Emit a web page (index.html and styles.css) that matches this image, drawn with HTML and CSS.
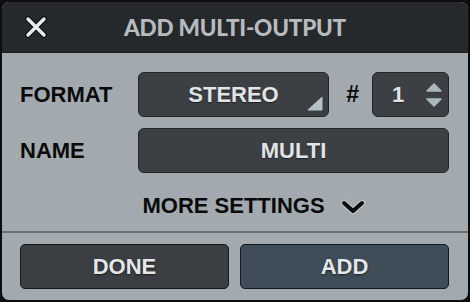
FILE: index.html
```html
<!DOCTYPE html>
<html>
<head>
<meta charset="utf-8">
<link rel="stylesheet" href="styles.css">
</head>
<body>
<div class="dialog">
  <div class="header">
    <svg class="close" width="22" height="22" viewBox="0 0 22 22">
      <path d="M3 3 L19 19 M19 3 L3 19" stroke="#111" stroke-width="6" stroke-linecap="round"/>
      <path d="M3 3 L19 19 M19 3 L3 19" stroke="#e6eef2" stroke-width="3.4" stroke-linecap="round"/>
    </svg>
    <div class="title">ADD MULTI-OUTPUT</div>
  </div>
  <div class="body">
    <div class="form">
      <div class="label">FORMAT</div>
      <div class="row">
        <div class="field select">STEREO
          <svg class="corner" width="16" height="15" viewBox="0 0 16 15"><path d="M15 1 L15 14 L1 14 Z" fill="#b5c1c8" stroke="#b5c1c8" stroke-linejoin="round" stroke-width="1"/></svg>
        </div>
        <div class="hash">#</div>
        <div class="field num">
          <span class="numval">1</span>
          <svg class="stepper" width="18" height="28" viewBox="0 0 18 28">
            <path d="M2 10 L9 3 L16 10 Z" fill="#aab7bf" stroke="#aab7bf" stroke-width="1.5" stroke-linejoin="round"/>
            <path d="M2 18 L9 25 L16 18 Z" fill="#aab7bf" stroke="#aab7bf" stroke-width="1.5" stroke-linejoin="round"/>
          </svg>
        </div>
      </div>
      <div class="label">NAME</div>
      <div class="field name">MULTI</div>
    </div>
    <div class="more">
      <span>MORE SETTINGS</span>
      <svg class="chev" width="26" height="18" viewBox="0 0 26 18">
        <path d="M4 5 L13 13 L22 5" fill="none" stroke="#c8cfd3" stroke-width="6.4" stroke-linecap="round" stroke-linejoin="round" opacity="0.6"/>
        <path d="M4 5 L13 13 L22 5" fill="none" stroke="#0b0b0b" stroke-width="4" stroke-linecap="round" stroke-linejoin="round"/>
      </svg>
    </div>
    <div class="footer">
      <div class="btn done">DONE</div>
      <div class="btn add">ADD</div>
    </div>
  </div>
</div>
</body>
</html>
```
FILE: styles.css
```css
html, body {
  margin: 0;
  padding: 0;
  background: #0c0d0e;
  width: 470px;
  height: 302px;
  overflow: hidden;
}
.dialog {
  margin: 2px 2px 0 2px;
  width: 466px;
  height: 298px;
  border-radius: 7px;
  overflow: hidden;
  background: #a3aaaf;
  display: flex;
  flex-direction: column;
  font-family: "Liberation Sans", Arial, sans-serif;
}
.header {
  height: 50px;
  flex: none;
  background: #26292c;
  border-bottom: 1px solid #1a1c1e;
  display: flex;
  align-items: center;
  position: relative;
}
.close {
  margin-left: 23px;
  margin-top: -1px;
}
.title {
  position: absolute;
  left: 0;
  right: 0;
  text-align: center;
  font-family: Lato, "Open Sans", sans-serif;
  font-weight: 900;
  font-size: 22.5px;
  color: #b8bbbe;
  letter-spacing: -0.2px;
  pointer-events: none;
}
.body {
  flex: 1;
  display: flex;
  flex-direction: column;
}
.form {
  display: grid;
  grid-template-columns: 118px 311px;
  grid-auto-rows: 45px;
  row-gap: 11px;
  padding: 19px 0 0 18px;
  align-items: center;
}
.label {
  font-weight: bold;
  font-size: 22px;
  color: #0a0a0a;
}
.row {
  display: flex;
  align-items: center;
  height: 45px;
}
.field {
  box-sizing: border-box;
  height: 45px;
  background: #3c4044;
  border: 1.5px solid #212427;
  border-radius: 6px;
  color: #e2e4e5;
  font-weight: bold;
  font-size: 22px;
  display: flex;
  align-items: center;
  justify-content: center;
  position: relative;
  text-shadow: 0 1px 1px rgba(0,0,0,0.5);
}
.select {
  width: 191px;
}
.corner {
  position: absolute;
  right: 5px;
  bottom: 5px;
}
.hash {
  width: 43px;
  text-align: center;
  font-weight: bold;
  font-style: italic;
  font-size: 23px;
  color: #0a0a0a;
  padding-left: 4px;
  box-sizing: border-box;
}
.num {
  width: 77px;
  justify-content: flex-start;
}
.numval {
  margin-left: 19px;
}
.stepper {
  position: absolute;
  right: 5px;
  top: 8px;
}
.name {
  width: 311px;
  height: 45px;
}
.more {
  height: 60px;
  display: flex;
  align-items: center;
  justify-content: center;
  gap: 15px;
  font-weight: bold;
  font-size: 22px;
  color: #0a0a0a;
  padding: 8px 0 0 38px;
  box-sizing: border-box;
  border-bottom: 2px solid #6b7175;
}
.chev {
  margin-top: 1px;
}
.footer {
  flex: 1;
  display: flex;
  gap: 11px;
  padding: 11px 18px 0 18px;
}
.btn {
  box-sizing: border-box;
  width: 209px;
  height: 45px;
  border: 1.5px solid #16181a;
  border-radius: 5px;
  display: flex;
  align-items: center;
  justify-content: center;
  font-weight: bold;
  font-size: 22px;
  color: #e4e6e7;
  text-shadow: 0 1px 2px rgba(0,0,0,0.6);
}
.done {
  background: #3b3f43;
}
.add {
  background: #3e4d58;
}
```
